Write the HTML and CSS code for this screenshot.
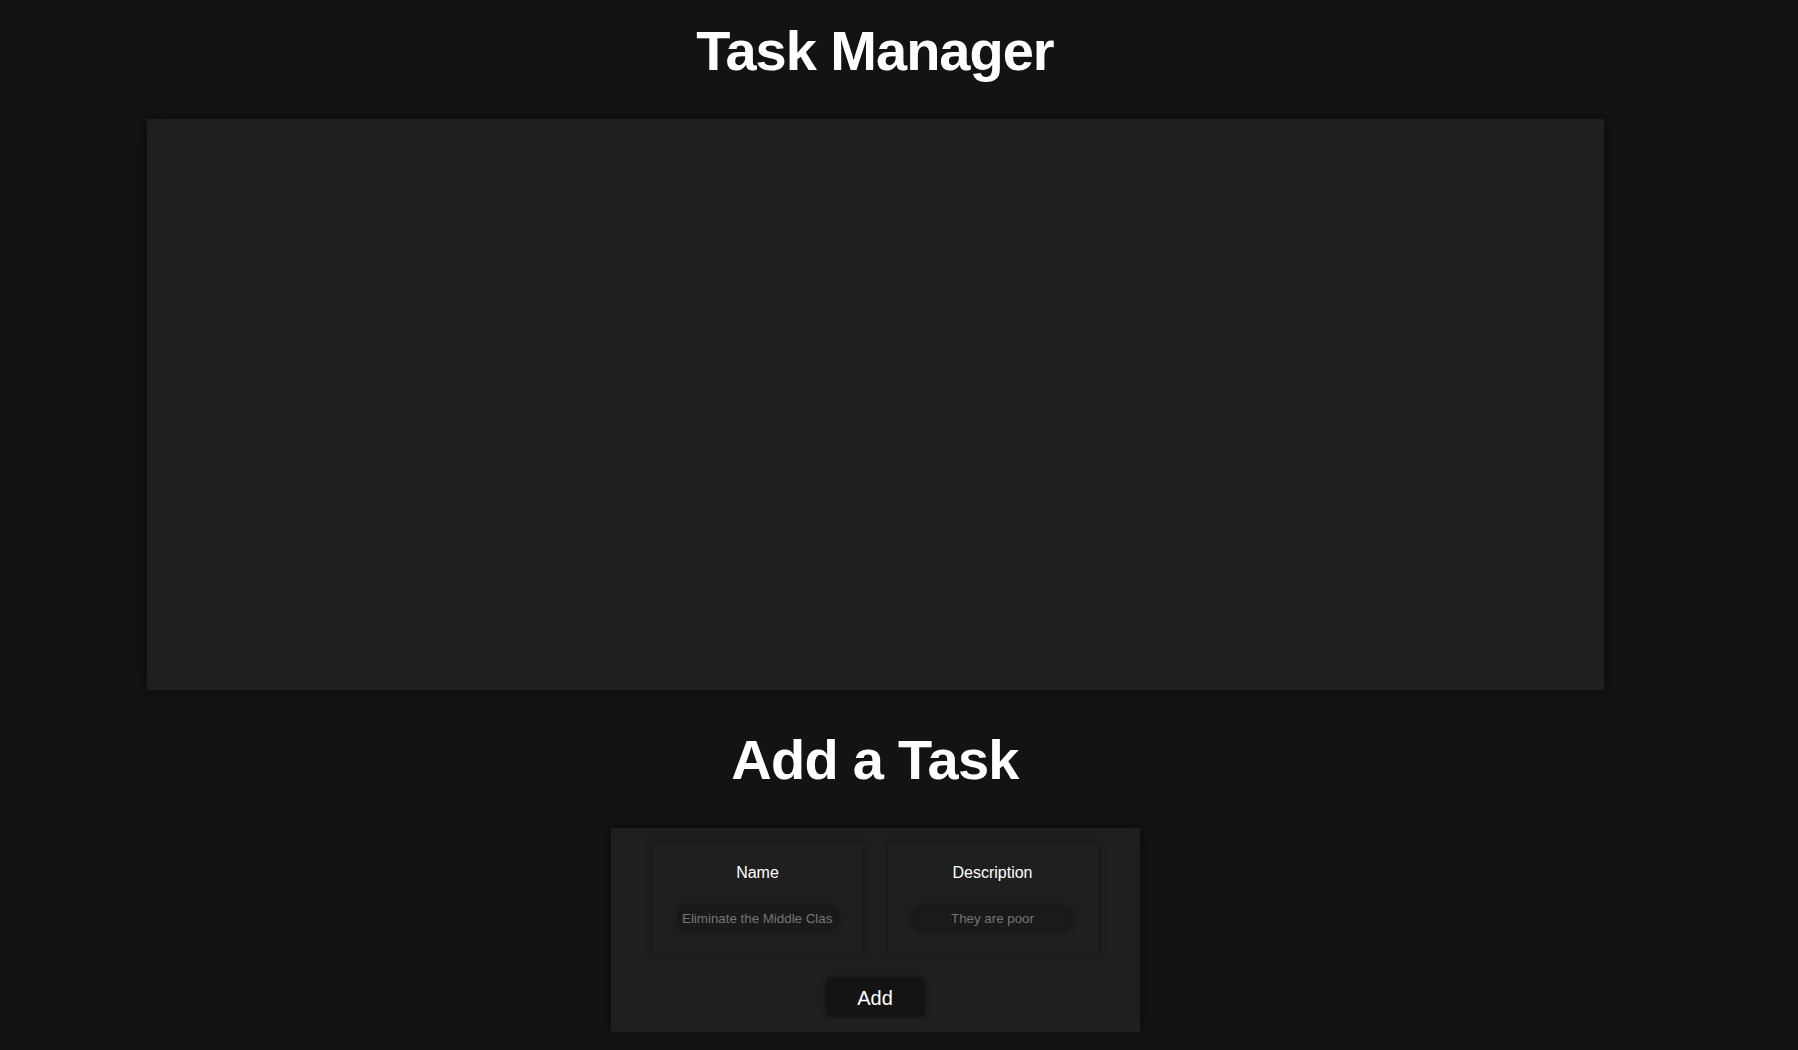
FILE: index.html
```html
<!DOCTYPE html>
<html lang="en">
<head>
<meta charset="utf-8">
<title>Task Manager</title>
<link rel="stylesheet" href="styles.css">
</head>
<body>
<div class="app">
  <h1 class="title">Task Manager</h1>
  <section class="task-list"></section>
  <h1 class="title title-add">Add a Task</h1>
  <form class="task-form">
    <div class="fields">
      <div class="field-card">
        <label class="field-label" for="name">Name</label>
        <input class="field-input" id="name" type="text" placeholder="Eliminate the Middle Class">
      </div>
      <div class="field-card">
        <label class="field-label" for="desc">Description</label>
        <input class="field-input" id="desc" type="text" placeholder="They are poor">
      </div>
    </div>
    <button class="add-btn" type="button">Add</button>
  </form>
</div>
</body>
</html>
```

FILE: styles.css
```css
html, body {
  margin: 0;
  padding: 0;
  background: #131313;
}

body {
  font-family: "Liberation Sans", Arial, sans-serif;
  color: #ffffff;
}

.app {
  width: 1750px;
  display: flex;
  flex-direction: column;
  align-items: center;
}

.title {
  margin: 19px 0 0;
  font-size: 56px;
  line-height: 64px;
  font-weight: 700;
  letter-spacing: -1px;
  text-align: center;
}

.title-add {
  margin-top: 38px;
  letter-spacing: -0.7px;
}

.task-list {
  margin-top: 36px;
  width: 1457px;
  height: 571px;
  background: #1f1f1f;
  box-shadow: 0 0 18px rgba(0, 0, 0, 0.45);
}

.task-form {
  margin: 36px 0 0;
  width: 529px;
  box-sizing: border-box;
  padding: 15px 42px 15px;
  background: #1f1f1f;
  box-shadow: 0 0 14px rgba(0, 0, 0, 0.45);
  display: flex;
  flex-direction: column;
  align-items: center;
}

.fields {
  display: flex;
  gap: 25px;
}

.field-card {
  width: 210px;
  height: 110px;
  box-sizing: border-box;
  padding-top: 21px;
  background: #1f1f1f;
  box-shadow: 0 0 7px rgba(0, 0, 0, 0.45);
  display: flex;
  flex-direction: column;
  align-items: center;
}

.field-label {
  display: block;
  font-size: 16px;
  line-height: 18px;
  color: #ffffff;
  margin-bottom: 26px;
}

.field-input {
  width: 155px;
  height: 21px;
  box-sizing: border-box;
  padding: 0 2px;
  border: none;
  border-radius: 8px;
  background: #1a1a1a;
  box-shadow: 0 0 6px 2px rgba(0, 0, 0, 0.4);
  font-family: "Liberation Sans", Arial, sans-serif;
  font-size: 13.333px;
  color: #ffffff;
  text-align: center;
  outline: none;
}

.field-input::placeholder {
  color: #757575;
}

.add-btn {
  margin-top: 25px;
  width: 99px;
  height: 39px;
  padding: 9px 0 7px;
  border: none;
  border-radius: 5px;
  background: #141414;
  box-shadow: 0 0 5px rgba(0, 0, 0, 0.35);
  color: #ffffff;
  font-family: "Liberation Sans", Arial, sans-serif;
  font-size: 20px;
  line-height: 23px;
  cursor: pointer;
}
```
